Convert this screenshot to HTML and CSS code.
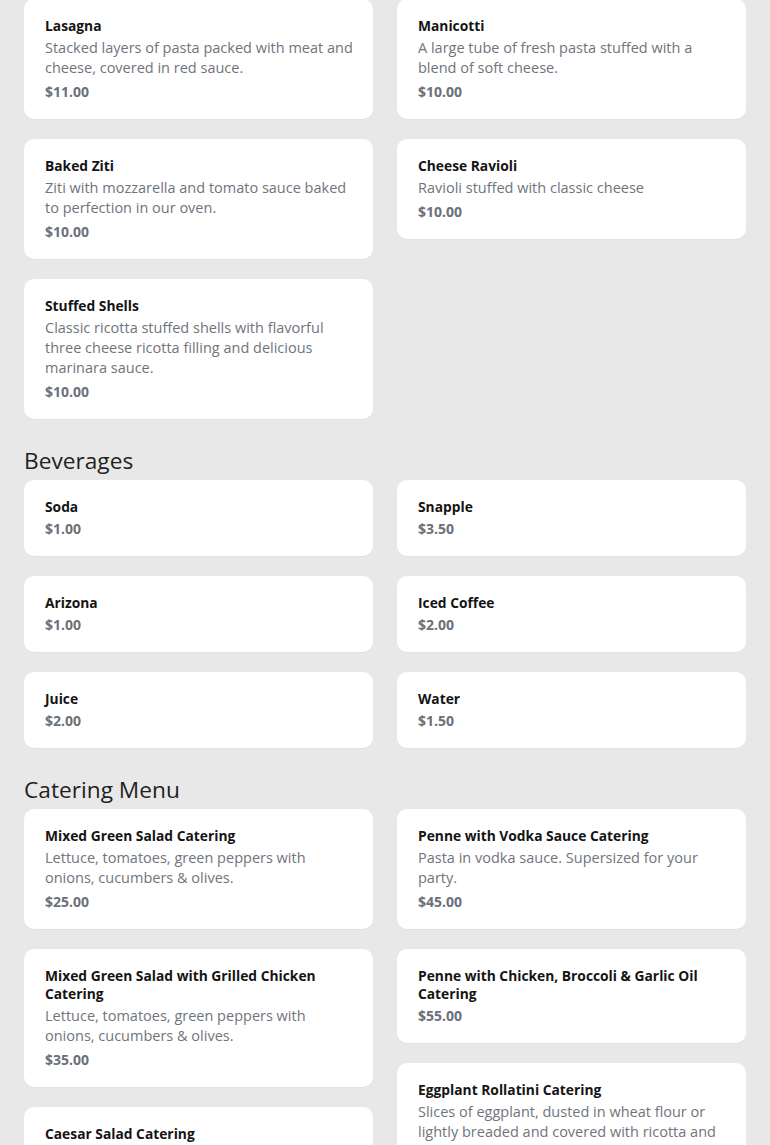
FILE: index.html
```html
<!DOCTYPE html>
<html lang="en">
<head>
<meta charset="utf-8">
<title>Menu</title>
<link rel="stylesheet" href="styles.css">
</head>
<body>
<main class="menu">
  <section class="section section-first">
    <div class="columns">
      <div class="col">
        <div class="card"><h3 class="name">Lasagna</h3><p class="desc">Stacked layers of pasta packed with meat and cheese, covered in red sauce.</p><p class="price">$11.00</p></div>
        <div class="card"><h3 class="name">Baked Ziti</h3><p class="desc">Ziti with mozzarella and tomato sauce baked to perfection in our oven.</p><p class="price">$10.00</p></div>
        <div class="card"><h3 class="name">Stuffed Shells</h3><p class="desc">Classic ricotta stuffed shells with flavorful three cheese ricotta filling and delicious marinara sauce.</p><p class="price">$10.00</p></div>
      </div>
      <div class="col">
        <div class="card"><h3 class="name">Manicotti</h3><p class="desc">A large tube of fresh pasta stuffed with a blend of soft cheese.</p><p class="price">$10.00</p></div>
        <div class="card"><h3 class="name">Cheese Ravioli</h3><p class="desc">Ravioli stuffed with classic cheese</p><p class="price">$10.00</p></div>
      </div>
    </div>
  </section>

  <section class="section">
    <h2 class="section-title">Beverages</h2>
    <div class="columns">
      <div class="col">
        <div class="card"><h3 class="name">Soda</h3><p class="price">$1.00</p></div>
        <div class="card"><h3 class="name">Arizona</h3><p class="price">$1.00</p></div>
        <div class="card"><h3 class="name">Juice</h3><p class="price">$2.00</p></div>
      </div>
      <div class="col">
        <div class="card"><h3 class="name">Snapple</h3><p class="price">$3.50</p></div>
        <div class="card"><h3 class="name">Iced Coffee</h3><p class="price">$2.00</p></div>
        <div class="card"><h3 class="name">Water</h3><p class="price">$1.50</p></div>
      </div>
    </div>
  </section>

  <section class="section">
    <h2 class="section-title">Catering Menu</h2>
    <div class="columns">
      <div class="col">
        <div class="card"><h3 class="name">Mixed Green Salad Catering</h3><p class="desc">Lettuce, tomatoes, green peppers with onions, cucumbers &amp; olives.</p><p class="price">$25.00</p></div>
        <div class="card"><h3 class="name">Mixed Green Salad with Grilled Chicken Catering</h3><p class="desc">Lettuce, tomatoes, green peppers with onions, cucumbers &amp; olives.</p><p class="price">$35.00</p></div>
        <div class="card"><h3 class="name">Caesar Salad Catering</h3><p class="desc">Romaine lettuce, croutons and parmesan cheese tossed in caesar dressing.</p><p class="price">$30.00</p></div>
      </div>
      <div class="col">
        <div class="card"><h3 class="name">Penne with Vodka Sauce Catering</h3><p class="desc">Pasta in vodka sauce. Supersized for your party.</p><p class="price">$45.00</p></div>
        <div class="card"><h3 class="name">Penne with Chicken, Broccoli &amp; Garlic Oil Catering</h3><p class="price">$55.00</p></div>
        <div class="card"><h3 class="name">Eggplant Rollatini Catering</h3><p class="desc">Slices of eggplant, dusted in wheat flour or lightly breaded and covered with ricotta and mozzarella cheese.</p><p class="price">$60.00</p></div>
      </div>
    </div>
  </section>
</main>
</body>
</html>
```

FILE: styles.css
```css
* { box-sizing: border-box; }

html, body {
  margin: 0;
  padding: 0;
  background: #e8e8e8;
}

body {
  font-family: "Open Sans", "Noto Sans", "Liberation Sans", sans-serif;
  color: #1a1a1a;
}

.menu {
  padding: 0 24px 40px;
  margin-top: -1px;
}

.section + .section {
  margin-top: 26px;
}

.section-title {
  margin: 0 0 3px;
  font-size: 22.7px;
  line-height: 32px;
  font-weight: 400;
  color: #1f1f1f;
}

.columns {
  display: flex;
  gap: 24px;
  align-items: flex-start;
}

.col {
  flex: 1 1 0;
  min-width: 0;
  display: flex;
  flex-direction: column;
  gap: 20px;
}

.card {
  background: #ffffff;
  border-radius: 10px;
  padding: 18px 20px 17px 21px;
  box-shadow: 0 1px 1px rgba(0, 0, 0, 0.03);
}

.name {
  margin: 0;
  font-size: 13.8px;
  line-height: 18px;
  font-weight: 700;
  color: #141414;
}

.desc {
  margin: 3px 0 0;
  font-size: 14.5px;
  line-height: 20px;
  color: #70747c;
}

.price {
  margin: 3px 0 0;
  font-size: 14px;
  line-height: 20px;
  font-weight: 700;
  color: #6b7079;
}

.desc + .price {
  margin-top: 4px;
}
```
